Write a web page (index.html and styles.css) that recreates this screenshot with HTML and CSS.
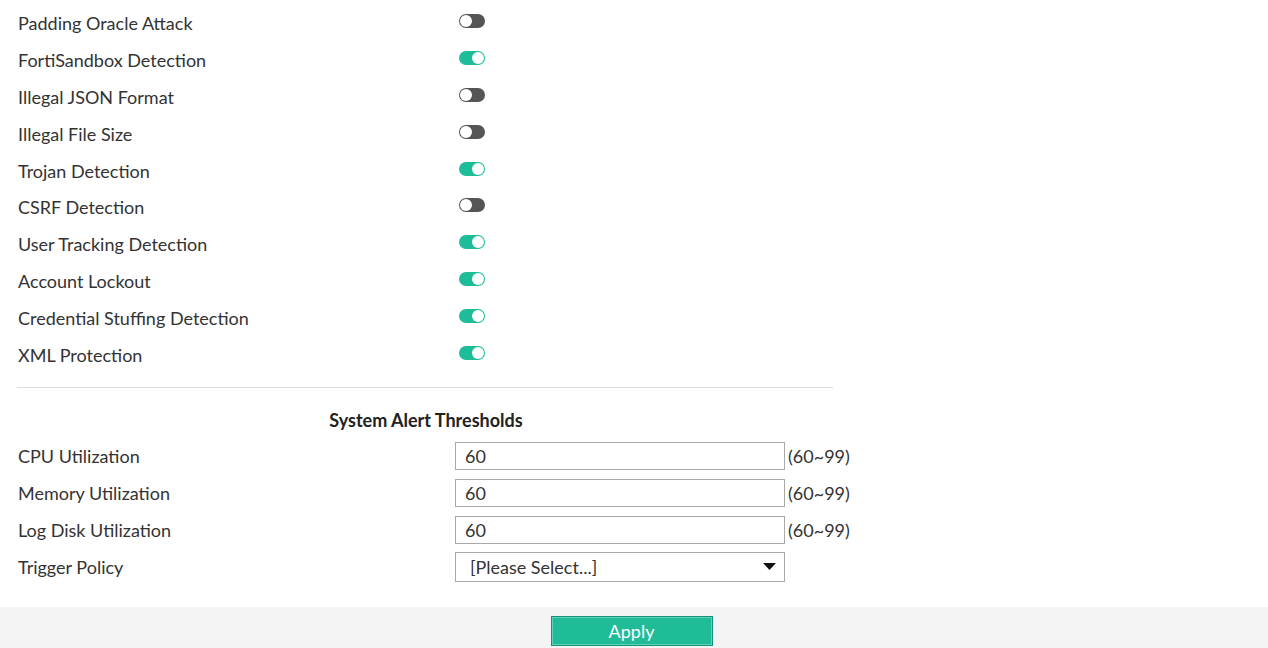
FILE: index.html
```html
<!DOCTYPE html>
<html>
<head>
<meta charset="utf-8">
<link rel="stylesheet" href="styles.css">
</head>
<body>
<div class="content">
  <div class="row"><span class="label">Padding Oracle Attack</span><span class="toggle off"><span class="knob"></span></span></div>
  <div class="row"><span class="label">FortiSandbox Detection</span><span class="toggle on"><span class="knob"></span></span></div>
  <div class="row"><span class="label">Illegal JSON Format</span><span class="toggle off"><span class="knob"></span></span></div>
  <div class="row"><span class="label">Illegal File Size</span><span class="toggle off"><span class="knob"></span></span></div>
  <div class="row"><span class="label">Trojan Detection</span><span class="toggle on"><span class="knob"></span></span></div>
  <div class="row"><span class="label">CSRF Detection</span><span class="toggle off"><span class="knob"></span></span></div>
  <div class="row"><span class="label">User Tracking Detection</span><span class="toggle on"><span class="knob"></span></span></div>
  <div class="row"><span class="label">Account Lockout</span><span class="toggle on"><span class="knob"></span></span></div>
  <div class="row"><span class="label">Credential Stuffing Detection</span><span class="toggle on"><span class="knob"></span></span></div>
  <div class="row"><span class="label">XML Protection</span><span class="toggle on"><span class="knob"></span></span></div>

  <div class="divider"></div>
  <div class="section-title">System Alert Thresholds</div>

  <div class="row"><span class="label">CPU Utilization</span><input class="text-input" type="text" value="60"><span class="hint">(60~99)</span></div>
  <div class="row"><span class="label">Memory Utilization</span><input class="text-input" type="text" value="60"><span class="hint">(60~99)</span></div>
  <div class="row"><span class="label">Log Disk Utilization</span><input class="text-input" type="text" value="60"><span class="hint">(60~99)</span></div>
  <div class="row"><span class="label">Trigger Policy</span>
    <div class="select-box"><span>[Please Select...]</span>
      <svg class="caret" width="13" height="7" viewBox="0 0 13 7"><path d="M0 0 H13 L6.5 7 Z" fill="#111"/></svg>
    </div>
  </div>
</div>
<div class="footer">
  <button class="apply">Apply</button>
</div>
</body>
</html>
```
FILE: styles.css
```css
html, body {
  margin: 0;
  padding: 0;
  background: #fff;
}
body {
  font-family: Lato, "Open Sans", sans-serif;
  font-size: 18px;
  color: #333;
  height: 648px;
  overflow: hidden;
}
.content {
  padding: 5px 0 0 18px;
  height: 607px;
  box-sizing: border-box;
}
.row {
  display: flex;
  align-items: center;
  height: 36.8px;
}
.label {
  width: 437px;
  flex: none;
}
.toggle {
  position: relative;
  width: 26px;
  height: 14px;
  border-radius: 7px;
  margin-left: 4px;
  margin-top: -4px;
  background: #555;
  box-sizing: border-box;
}
.toggle.on {
  background: #1ebc98;
}
.knob {
  position: absolute;
  top: 1px;
  width: 12px;
  height: 12px;
  border-radius: 50%;
  background: #fff;
}
.toggle.off .knob { left: 1px; }
.toggle.on .knob { right: 1px; }

.divider {
  width: 816px;
  margin-left: -1px;
  margin-top: 14px;
  height: 1px;
  background: #ddd;
}
.section-title {
  width: 816px;
  text-align: center;
  font-weight: bold;
  line-height: 30px;
  margin-top: 17px;
  margin-bottom: 3px;
  color: #222;
}
.text-input {
  width: 330px;
  height: 28px;
  box-sizing: border-box;
  border: 1px solid #a9a9a9;
  padding: 0 9px;
  font-family: Lato, sans-serif;
  font-size: 18px;
  color: #333;
  margin: 0;
  outline: none;
}
.hint {
  margin-left: 3px;
}
.select-box {
  width: 330px;
  height: 30px;
  box-sizing: border-box;
  border: 1px solid #a9a9a9;
  display: flex;
  align-items: center;
  justify-content: space-between;
  padding: 0 8px 0 14px;
}
.caret {
  display: block;
}
.footer {
  height: 41px;
  background: #f4f4f4;
  display: flex;
  justify-content: center;
  align-items: flex-start;
  padding-top: 9px;
  box-sizing: border-box;
}
.apply {
  width: 162px;
  height: 30px;
  margin-left: -5px;
  background: #20bc98;
  border: 1px solid #15917a;
  box-shadow: inset 0 0 0 1px #5fd3b8;
  color: #fff;
  font-family: Lato, sans-serif;
  font-size: 18px;
  padding: 0;
  cursor: pointer;
}
```
